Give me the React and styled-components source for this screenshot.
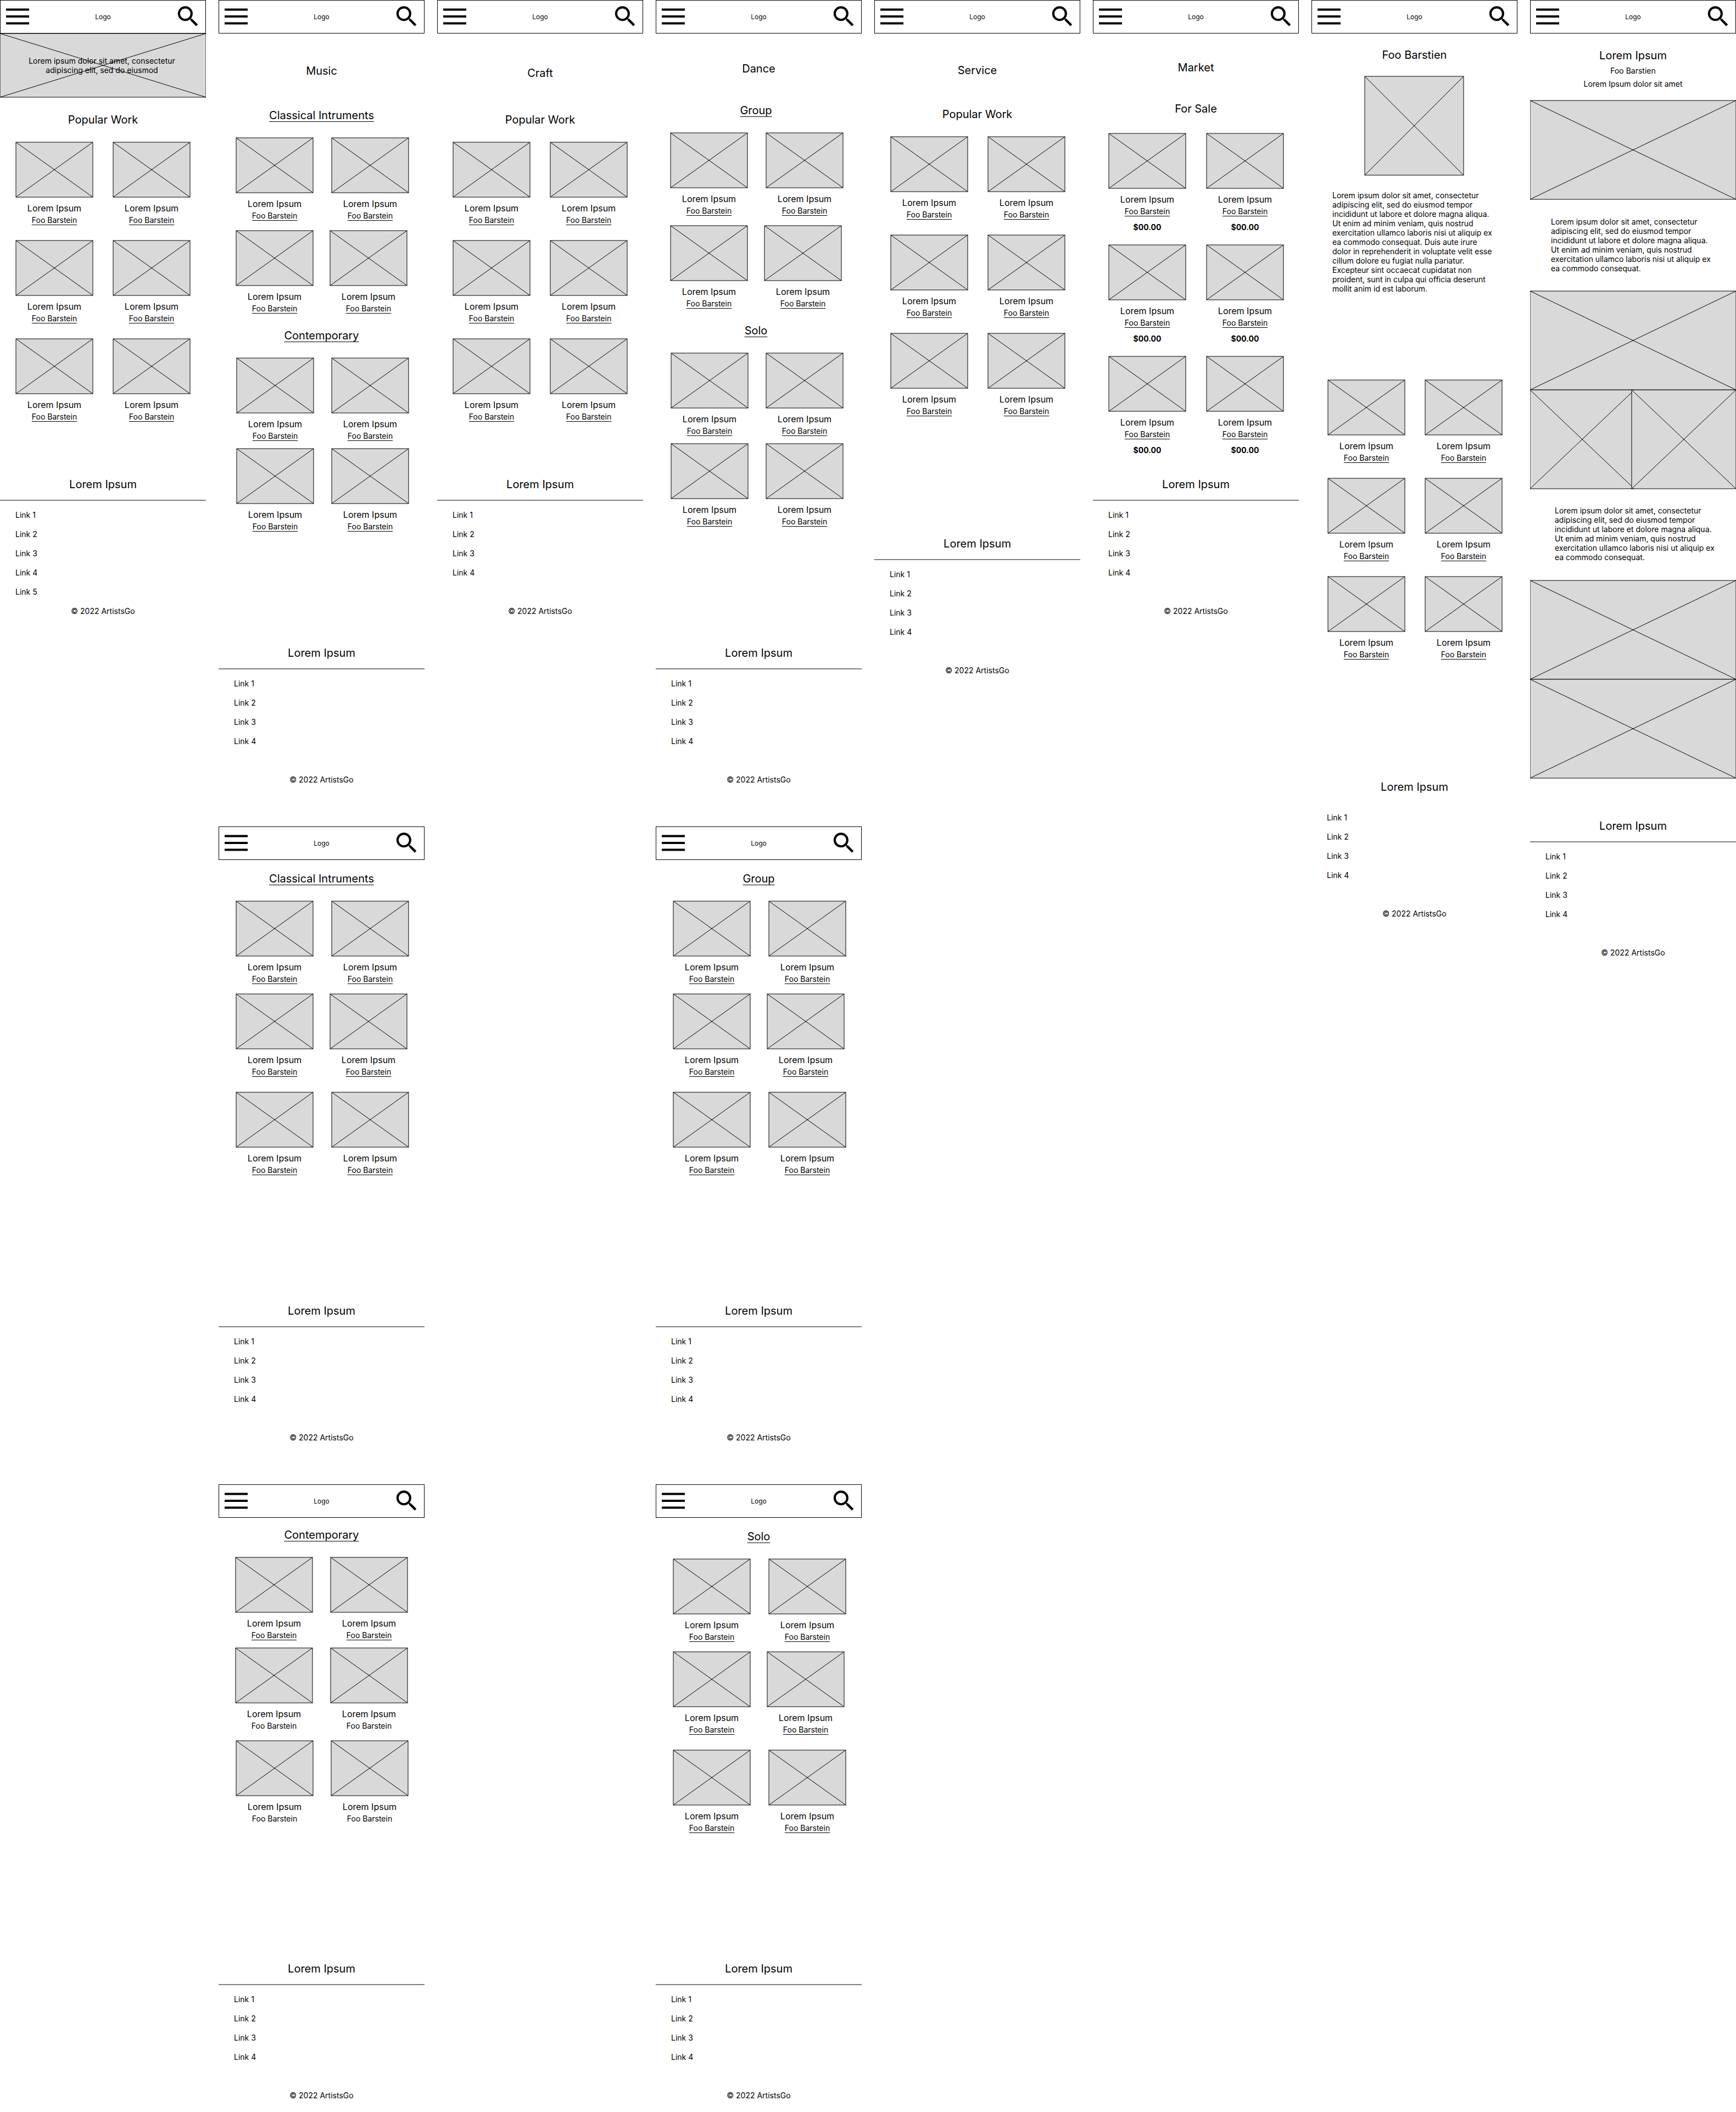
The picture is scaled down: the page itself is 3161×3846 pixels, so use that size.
import React from 'react';
import styled, { createGlobalStyle } from 'styled-components';

const GlobalStyle = createGlobalStyle`
  *, *::before, *::after { box-sizing: border-box; }
  body {
    margin: 0;
    background: #fff;
    color: #000;
    font-family: Inter, "Liberation Sans", sans-serif;
    font-size: 14px;
    line-height: 17px;
  }
  h1, h2, h3, p, ul { margin: 0; padding: 0; font-weight: 400; }
`;

const Board = styled.main`
  display: grid;
  grid-template-columns: repeat(8, minmax(0, 1fr));
  column-gap: 23px;
  align-items: start;
`;

const Column = styled.div`
  display: flex;
  flex-direction: column;
  gap: 55px;
`;

const Screen = styled.article`
  display: flex;
  flex-direction: column;
  padding-bottom: 22px;
  overflow: hidden;
`;

const Bar = styled.header`
  display: grid;
  grid-template-columns: 1fr auto 1fr;
  align-items: center;
  height: 61px;
  padding: 0 6px;
  border: 1px solid #000;
`;

const IconButton = styled.button`
  display: flex;
  padding: 0;
  border: 0;
  background: none;
  color: inherit;
  cursor: pointer;
`;

const MenuButton = styled(IconButton)`
  justify-self: start;
  padding-left: 4px;
`;

const SearchButton = styled(IconButton)`
  justify-self: end;
`;

const Logo = styled.span`
  font-size: 12px;
  line-height: 15px;
`;

const Title = styled.h1`
  margin-top: ${(p) => p.$top}px;
  font-size: 20px;
  line-height: 24px;
  text-align: center;
`;

const Section = styled.section`
  margin-top: ${(p) => p.$top}px;
  padding-right: ${(p) => p.$inset || 0}px;
`;

const Heading = styled.h2`
  font-size: 20px;
  line-height: 24px;
  text-align: center;
`;

const TextLink = styled.a`
  color: inherit;
  text-decoration: ${(p) => (p.$plain ? 'none' : 'underline')};
  text-decoration-thickness: 1px;
  text-decoration-skip-ink: none;
  text-underline-offset: 3px;

  ${Heading} & { text-underline-offset: 4px; }
`;

const Works = styled.div`
  display: flex;
  flex-direction: column;
  margin-top: ${(p) => p.$top}px;
`;

const Pair = styled.div`
  display: grid;
  grid-template-columns: 1fr 1fr;
  column-gap: ${(p) => p.$gutter}px;
  margin-top: ${(p) => p.$space}px;
  padding: 0 ${(p) => p.$end}px 0 ${(p) => p.$start}px;
`;

const Card = styled.div`
  display: flex;
  flex-direction: column;
  align-items: center;
`;

const CardTitle = styled.h3`
  margin-top: 11px;
  font-size: 16px;
  line-height: 19px;
`;

const CardArtist = styled.p`
  margin-top: 3px;
  padding-bottom: 1px;
`;

const Price = styled.p`
  margin-top: 11px;
  font-weight: 700;
`;

const Frame = styled.svg`
  display: block;
  width: 100%;
  height: ${(p) => p.$height}px;
  overflow: visible;
`;

const Hero = styled.div`
  display: grid;
  align-items: center;
  justify-items: center;

  & > * { grid-area: 1 / 1; }
`;

const HeroText = styled.p`
  max-width: 284px;
  padding-right: 4px;
  text-align: center;
  z-index: 1;
`;

const Portrait = styled.div`
  margin-top: 27px;
  padding: 0 98px 0 97px;
`;

const Photos = styled.div`
  margin-top: ${(p) => p.$top}px;
`;

const SplitRow = styled.div`
  display: flex;
`;

const SplitItem = styled.div`
  flex: 1;
  & + & { margin-left: -5px; }
`;

const Copy = styled.p`
  margin-top: ${(p) => p.$top}px;
  padding: 0 ${(p) => 81 - p.$start}px 0 ${(p) => p.$start}px;
`;

const Byline = styled.p`
  margin-top: 7px;
  text-align: center;
`;

const Foot = styled.footer`
  margin-top: ${(p) => p.$top}px;
`;

const FootTitle = styled.h2`
  padding-bottom: 16px;
  border-bottom: 2px solid ${(p) => (p.$divider ? '#808080' : 'transparent')};
  font-size: 20px;
  line-height: 24px;
  text-align: center;
`;

const Links = styled.ul`
  min-height: 175px;
  margin-top: 17px;
  padding-left: 28px;
  list-style: none;
`;

const LinkItem = styled.li`
  height: 35px;
`;

const Copyright = styled.p`
  text-align: center;
`;

function Picture({ height = 100 }) {
  return (
    <Frame $height={height} role="img" aria-label="Picture placeholder">
      <rect width="100%" height="100%" fill="#d9d9d9" stroke="#000" />
      <line x1="0" y1="0" x2="100%" y2="100%" stroke="#000" />
      <line x1="0" y1="100%" x2="100%" y2="0" stroke="#000" />
    </Frame>
  );
}

function MenuIcon() {
  return (
    <svg width="42" height="31" viewBox="0 0 42 31" aria-hidden="true">
      <path d="M0 .4h42v4.2H0zM0 12.9h42v4.2H0zM0 25.4h42v4.2H0z" />
    </svg>
  );
}

function SearchIcon() {
  return (
    <svg width="50" height="51" viewBox="0 0 24 24.48" aria-hidden="true">
      <path
        transform="translate(-.2 0)"
        d="M15.5 14h-.79l-.28-.27A6.471 6.471 0 0 0 16 9.5 6.5 6.5 0 1 0 9.5 16c1.61 0 3.09-.59 4.23-1.57l.27.28v.79l5 4.99L20.49 19l-4.99-5zm-6 0C7.01 14 5 11.99 5 9.5S7.01 5 9.5 5 14 7.01 14 9.5 11.99 14 9.5 14z"
      />
    </svg>
  );
}

function TopBar() {
  return (
    <Bar>
      <MenuButton type="button" aria-label="Menu">
        <MenuIcon />
      </MenuButton>
      <Logo>Logo</Logo>
      <SearchButton type="button" aria-label="Search">
        <SearchIcon />
      </SearchButton>
    </Bar>
  );
}

function Work({ price, plain }) {
  return (
    <Card>
      <Picture />
      <CardTitle>Lorem Ipsum</CardTitle>
      <CardArtist>
        <TextLink href="#artist" $plain={plain}>Foo Barstein</TextLink>
      </CardArtist>
      {price && <Price>{price}</Price>}
    </Card>
  );
}

// Each row is [space above, left inset, gutter, right inset].
function Gallery({ top = 29, rows, price, plainFrom = Infinity }) {
  return (
    <Works $top={top}>
      {rows.map(([space, start, gutter, end], i) => (
        <Pair key={i} $space={space} $start={start} $gutter={gutter} $end={end}>
          <Work price={price} plain={i >= plainFrom} />
          <Work price={price} plain={i >= plainFrom} />
        </Pair>
      ))}
    </Works>
  );
}

function Group({ top, title, linked, inset, galleryTop, ...gallery }) {
  return (
    <Section $top={top} $inset={inset}>
      <Heading>{linked ? <TextLink href="#category">{title}</TextLink> : title}</Heading>
      <Gallery top={galleryTop} {...gallery} />
    </Section>
  );
}

function Footer({ top, links = 4, divider = true }) {
  return (
    <Foot $top={top}>
      <FootTitle $divider={divider}>Lorem Ipsum</FootTitle>
      <Links>
        {Array.from({ length: links }, (_, i) => (
          <LinkItem key={i}>
            <TextLink href="#link" $plain>Link {i + 1}</TextLink>
          </LinkItem>
        ))}
      </Links>
      <Copyright>© 2022 ArtistsGo</Copyright>
    </Foot>
  );
}

const POPULAR = [[0, 29, 37, 29], [28, 29, 37, 29], [28, 29, 37, 29]];
const SERVICE = [[0, 30, 37, 28], [28, 30, 37, 28], [28, 30, 37, 28]];
const MARKET = [[0, 29, 38, 28], [24, 29, 38, 28], [24, 29, 38, 28]];
const CLASSICAL = [[0, 32, 34, 29], [18, 32, 31, 32]];
const CONTEMPORARY = [[0, 33, 33, 29], [14, 33, 33, 29]];
const DANCE_GROUP = [[0, 27, 34, 24], [18, 27, 31, 27]];
const DANCE_SOLO = [[0, 28, 33, 24], [14, 28, 33, 24]];
const CATEGORY = [[0, 32, 34, 29], [18, 32, 31, 32], [28, 32, 34, 29]];
const CATEGORY_CONTEMPORARY = [[0, 31, 33, 31], [14, 31, 33, 31], [18, 32, 33, 30]];

const SHORT_COPY =
  'Lorem ipsum dolor sit amet, consectetur adipiscing elit, sed do eiusmod tempor incididunt ut labore et dolore magna aliqua. Ut enim ad minim veniam, quis nostrud exercitation ullamco laboris nisi ut aliquip ex ea commodo consequat.';
const LONG_COPY = `${SHORT_COPY} Duis aute irure dolor in reprehenderit in voluptate velit esse cillum dolore eu fugiat nulla pariatur. Excepteur sint occaecat cupidatat non proident, sunt in culpa qui officia deserunt mollit anim id est laborum.`;

function CategoryScreen({ title, top = 22, rows = CATEGORY, plainFrom, footerTop = 235 }) {
  return (
    <Screen>
      <TopBar />
      <Group top={top} title={title} linked rows={rows} plainFrom={plainFrom} />
      <Footer top={footerTop} />
    </Screen>
  );
}

export default function App() {
  return (
    <>
      <GlobalStyle />
      <Board>
        <Column>
          <Screen>
            <TopBar />
            <Hero>
              <Picture height={116} />
              <HeroText>Lorem ipsum dolor sit amet, consectetur adipiscing elit, sed do eiusmod</HeroText>
            </Hero>
            <Group top={29} title="Popular Work" rows={POPULAR} />
            <Footer top={102} links={5} />
          </Screen>
        </Column>

        <Column>
          <Screen>
            <TopBar />
            <Title $top={56}>Music</Title>
            <Group top={57} title="Classical Intruments" linked rows={CLASSICAL} />
            <Group top={28} title="Contemporary" linked rows={CONTEMPORARY} />
            <Footer top={209} />
          </Screen>
          <CategoryScreen title="Classical Intruments" />
          <CategoryScreen
            title="Contemporary"
            top={19}
            rows={CATEGORY_CONTEMPORARY}
            plainFrom={1}
            footerTop={252}
          />
        </Column>

        <Column>
          <Screen>
            <TopBar />
            <Title $top={60}>Craft</Title>
            <Group top={61} title="Popular Work" rows={POPULAR} />
            <Footer top={102} />
          </Screen>
        </Column>

        <Column>
          <Screen>
            <TopBar />
            <Title $top={52}>Dance</Title>
            <Group top={52} title="Group" linked inset={10} rows={DANCE_GROUP} />
            <Group top={28} title="Solo" linked inset={10} rows={DANCE_SOLO} />
            <Footer top={218} />
          </Screen>
          <CategoryScreen title="Group" />
          <CategoryScreen title="Solo" />
        </Column>

        <Column>
          <Screen>
            <TopBar />
            <Title $top={55}>Service</Title>
            <Group top={56} title="Popular Work" rows={SERVICE} />
            <Footer top={220} />
          </Screen>
        </Column>

        <Column>
          <Screen>
            <TopBar />
            <Title $top={50}>Market</Title>
            <Group top={51} title="For Sale" galleryTop={33} rows={MARKET} price="$00.00" />
            <Footer top={42} />
          </Screen>
        </Column>

        <Column>
          <Screen>
            <TopBar />
            <Title $top={27}>Foo Barstien</Title>
            <Portrait>
              <Picture height={180} />
            </Portrait>
            <Copy $top={28} $start={38}>{LONG_COPY}</Copy>
            <Gallery top={158} rows={SERVICE} />
            <Footer top={220} divider={false} />
          </Screen>
        </Column>

        <Column>
          <Screen>
            <TopBar />
            <Title $top={28}>Lorem Ipsum</Title>
            <Byline>Foo Barstien</Byline>
            <Byline>Lorem Ipsum dolor sit amet</Byline>
            <Photos $top={22}>
              <Picture height={180} />
            </Photos>
            <Copy $top={32} $start={38}>{SHORT_COPY}</Copy>
            <Photos $top={33}>
              <Picture height={180} />
              <SplitRow>
                <SplitItem><Picture height={180} /></SplitItem>
                <SplitItem><Picture height={180} /></SplitItem>
              </SplitRow>
            </Photos>
            <Copy $top={31} $start={45}>{SHORT_COPY}</Copy>
            <Photos $top={34}>
              <Picture height={180} />
              <Picture height={180} />
            </Photos>
            <Footer top={75} />
          </Screen>
        </Column>
      </Board>
    </>
  );
}
